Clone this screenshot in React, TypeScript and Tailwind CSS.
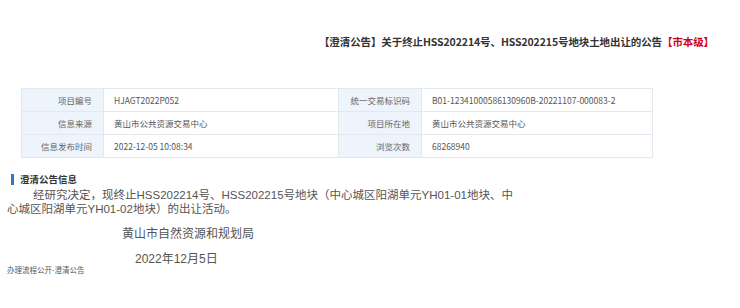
import React from 'react';

const rows = [
  ['项目编号', 'HJAGT2022P052', '统一交易标识码', 'B01-12341000586130960B-20221107-000083-2'],
  ['信息来源', '黄山市公共资源交易中心', '项目所在地', '黄山市公共资源交易中心'],
  ['信息发布时间', '2022-12-05 10:08:34', '浏览次数', '68268940'],
];

const sans = { fontFamily: '"Noto Sans CJK SC", sans-serif' };
const body = { fontFamily: '"Liberation Sans", "Noto Sans CJK SC", sans-serif' };

export default function App() {
  return (
    <div className="w-[740px] h-[308px] bg-white overflow-hidden text-[#333]" style={sans}>
      {/* title */}
      <div className="flex justify-end pr-[26px] pt-[35px] h-[88px]">
        <h1 className="text-[10.5px] leading-[14px] font-bold tracking-[-0.1px] h-[14px]">
          【澄清公告】关于终止HSS202214号、HSS202215号地块土地出让的公告<span className="text-[#d0021b]">【市本级】</span>
        </h1>
      </div>

      {/* info table */}
      <table className="ml-[21px] w-[632px] border-collapse table-fixed text-[8.5px] text-[#555]">
        <colgroup>
          <col className="w-[82px]" />
          <col className="w-[235px]" />
          <col className="w-[83px]" />
          <col />
        </colgroup>
        <tbody>
          {rows.map(r => (
            <tr key={r[0]} className="h-[23px]">
              <td className="border border-[#e3e8ee] bg-[#eef4fb] text-right pr-[11px] text-[#666]">{r[0]}</td>
              <td className="border border-[#e3e8ee] pl-[10px]">{r[1]}</td>
              <td className="border border-[#e3e8ee] bg-[#eef4fb] text-right pr-[11px] text-[#666]">{r[2]}</td>
              <td className="border border-[#e3e8ee] pl-[10px]">{r[3]}</td>
            </tr>
          ))}
        </tbody>
      </table>

      {/* section */}
      <div className="mt-[16px] flex items-center h-[11px]">
        <span className="ml-[11px] w-[3px] h-[11px] bg-[#2b7bc6]" />
        <span className="ml-[6px] text-[9.5px] font-bold text-[#333] leading-[11px]">澄清公告信息</span>
      </div>

      <div className="ml-[7px] w-[512px] text-[11.5px] leading-[13.5px] text-[#555]" style={body}>
        <p className="indent-[26px] mt-[4px]">
          经研究决定，现终止HSS202214号、HSS202215号地块（中心城区阳湖单元YH01-01地块、中心城区阳湖单元YH01-02地块）的出让活动。
        </p>
        <p className="ml-[115px] mt-[12px] text-[12px]">黄山市自然资源和规划局</p>
        <p className="ml-[128px] mt-[11px] text-[12px]">2022年12月5日</p>
      </div>

      <div className="ml-[7px] -mt-[1px] text-[7.5px] leading-[10px] text-[#555]">办理流程公开-澄清公告</div>
    </div>
  );
}
